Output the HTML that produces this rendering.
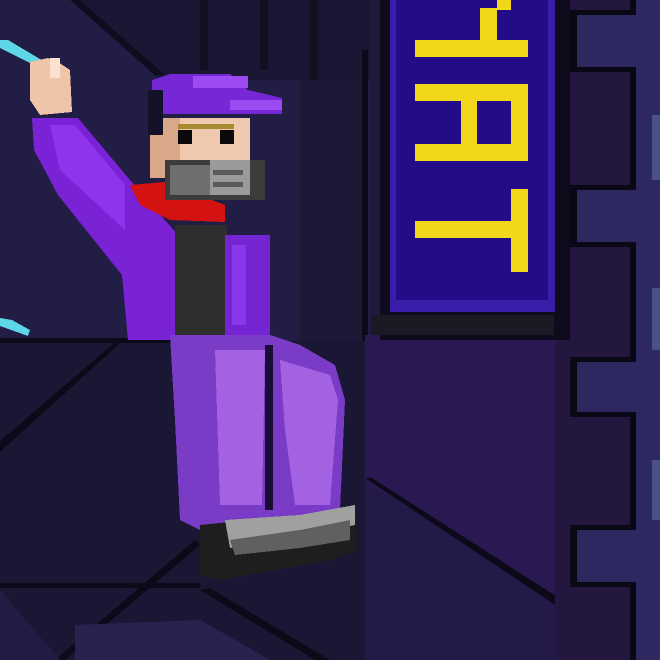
<!DOCTYPE html>
<html><head><style>html,body{margin:0;padding:0;background:#1c1838;overflow:hidden}svg{display:block}</style></head>
<body>
<svg width="660" height="660" viewBox="0 0 660 660" xmlns="http://www.w3.org/2000/svg" shape-rendering="crispEdges">
<rect width="660" height="660" fill="#1e1a3c"/>
<rect x="0" y="0" width="370" height="340" fill="#221d44"/>
<polygon points="70,0 370,0 370,80 160,80" fill="#1a1634"/>
<rect x="200" y="0" width="8" height="70" fill="#141024"/>
<rect x="260" y="0" width="8" height="70" fill="#141024"/>
<rect x="310" y="0" width="8" height="80" fill="#141024"/>
<polygon points="70,0 80,0 165,75 155,75" fill="#100c20"/>
<rect x="300" y="80" width="65" height="400" fill="#1c1836"/>
<rect x="362" y="50" width="6" height="430" fill="#0c0a18"/>
<rect x="0" y="341" width="365" height="319" fill="#1a1734"/>
<rect x="0" y="338" width="180" height="5" fill="#0c0a18"/>
<polygon points="0,441 120,338 126,338 0,452" fill="#0c0a18"/>
<rect x="0" y="583" width="200" height="5" fill="#0c0a18"/>
<polygon points="55,660 195,540 200,545 65,660" fill="#0c0a18"/>
<polygon points="0,590 0,660 60,660" fill="#201c44"/>
<polygon points="75,625 200,620 270,660 75,660" fill="#27234e"/>
<rect x="365" y="335" width="270" height="310" fill="#2a1852"/>
<polygon points="365,480 635,650 635,660 365,660" fill="#231a48"/>
<polygon points="365,478 372,478 640,650 630,655" fill="#0c0a18"/>
<polygon points="200,590 210,588 330,660 315,660" fill="#0c0a18"/>
<!-- right wall -->
<rect x="555" y="0" width="105" height="660" fill="#24173f"/>
<rect x="630" y="0" width="6" height="660" fill="#0a0814"/>
<rect x="636" y="0" width="24" height="660" fill="#2e2860"/>
<g fill="#0a0814">
<rect x="570" y="10" width="66" height="62"/>
<rect x="570" y="185" width="66" height="62"/>
<rect x="570" y="357" width="66" height="60"/>
<rect x="570" y="525" width="66" height="62"/>
</g>
<g fill="#2e2860">
<rect x="577" y="15" width="83" height="52"/>
<rect x="577" y="190" width="83" height="52"/>
<rect x="577" y="362" width="83" height="50"/>
<rect x="577" y="530" width="83" height="52"/>
</g>
<g fill="#4a5088">
<rect x="652" y="115" width="8" height="65"/>
<rect x="652" y="288" width="8" height="62"/>
<rect x="652" y="460" width="8" height="60"/>
</g>
<!-- sign -->
<rect x="380" y="0" width="190" height="340" fill="#0e0c1c"/>
<rect x="390" y="0" width="165" height="312" fill="#3a1eaa"/>
<rect x="396" y="0" width="152" height="300" fill="#240c88"/>
<rect x="372" y="315" width="182" height="20" fill="#1a1a24"/>
<g fill="#f2d81a">
<rect x="415" y="40" width="113" height="17"/>
<rect x="480" y="8" width="17" height="40"/>
<rect x="497" y="0" width="14" height="10"/>
<rect x="415" y="84" width="113" height="17"/>
<rect x="415" y="144" width="113" height="17"/>
<rect x="461" y="96" width="16" height="56"/>
<rect x="511" y="96" width="17" height="56"/>
<rect x="415" y="221" width="113" height="17"/>
<rect x="511" y="189" width="17" height="83"/>
</g>
<polygon points="0,40 8,40 45,62 40,68 0,48" fill="#5fd6e6"/>
<polygon points="0,318 12,320 30,330 28,336 0,326" fill="#5fd6e6"/>
<polygon points="32,118 78,118 130,180 178,235 178,340 128,340 122,275 58,195 34,150" fill="#7a22d6"/>
<polygon points="50,125 75,125 125,185 125,230 60,170" fill="#8e34ec"/>
<polygon points="30,62 48,58 58,62 70,70 72,112 40,115 30,100" fill="#f0c4a8"/>
<rect x="50" y="58" width="10" height="20" fill="#fce0d0"/>
<rect x="175" y="225" width="52" height="112" fill="#2e2e2e"/>
<rect x="225" y="235" width="45" height="105" fill="#7424d0"/>
<rect x="232" y="245" width="14" height="80" fill="#8a36ea"/>
<polygon points="130,185 165,182 225,205 225,222 170,220 140,205" fill="#d41212"/>
<rect x="150" y="118" width="100" height="45" fill="#f0c8b0"/>
<rect x="150" y="118" width="30" height="60" fill="#d8a888"/>
<rect x="178" y="130" width="14" height="14" fill="#0a0a0a"/>
<rect x="220" y="130" width="14" height="14" fill="#0a0a0a"/>
<rect x="178" y="124" width="56" height="5" fill="#a88a30"/>
<rect x="165" y="160" width="100" height="40" fill="#3c3c3c"/>
<rect x="170" y="165" width="40" height="30" fill="#6e6e6e"/>
<rect x="210" y="160" width="40" height="35" fill="#9a9a9a"/>
<rect x="213" y="170" width="30" height="5" fill="#5a5a5a"/>
<rect x="213" y="182" width="30" height="5" fill="#5a5a5a"/>
<polygon points="152,80 170,74 230,74 248,90 282,98 282,114 165,114 152,110" fill="#7628d6"/>
<rect x="193" y="76" width="55" height="12" fill="#9c4af2"/>
<rect x="230" y="100" width="52" height="10" fill="#9c4af2"/>
<rect x="148" y="90" width="15" height="45" fill="#14122a"/>
<polygon points="170,335 270,335 300,345 335,365 345,400 340,510 300,525 200,530 180,520 175,420" fill="#7a3cc6"/>
<polygon points="215,350 265,350 262,505 220,505" fill="#a462e2"/>
<polygon points="280,360 330,375 338,400 330,505 295,505 285,430" fill="#a462e2"/>
<rect x="265" y="345" width="8" height="165" fill="#1a0c34"/>
<polygon points="200,525 300,515 355,505 358,550 330,560 220,580 200,575" fill="#1e1e1e"/>
<polygon points="225,520 300,515 355,505 355,525 300,535 230,548" fill="#a0a0a0"/>
<polygon points="230,540 300,530 350,520 350,540 300,548 235,555" fill="#606060"/>
</svg>
</body></html>
